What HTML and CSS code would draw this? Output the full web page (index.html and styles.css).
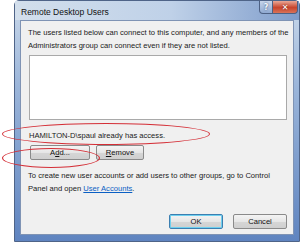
FILE: index.html
```html
<!DOCTYPE html>
<html lang="en">

    <head>
        <meta charset="UTF-8">
        <title>Remote Desktop Users</title>
        <link rel="stylesheet" href="styles.css">
    </head>

    <body>
        <div class="window">
            <div class="titlebar">
                <span class="title">Remote Desktop Users</span>
                <div class="caption-btns">
                    <span class="cap help">?</span>
                    <span class="cap close">✕</span>
                </div>
            </div>
            <div class="client">
                <p class="intro">The users listed below can connect to this computer, and any members of the Administrators group can connect even if they are not listed.</p>
                <div class="listbox"></div>
                <p class="access">HAMILTON-D\spaul already has access.</p>
                <div class="row">
                    <button class="btn add">A<u>d</u>d...</button>
                    <button class="btn remove"><u>R</u>emove</button>
                </div>
                <p class="note">To create new user accounts or add users to other groups, go to Control Panel and open <a href="#">User Accounts</a>.</p>
                <div class="footer">
                    <button class="btn ok">OK</button>
                    <button class="btn">Cancel</button>
                </div>
            </div>
        </div>
        <!-- red marks drawn over the dialog -->
        <div class="mark mark-access"></div>
        <div class="mark mark-add"></div>
    </body>

</html>
```

FILE: styles.css
```css
*,
*::before,
*::after {
    box-sizing: border-box;
}

body {
    margin: 0;
    width: 300px;
    height: 242px;
    overflow: hidden;
    position: relative;
    background: #fff;
    font-family: 'Liberation Sans', Arial, sans-serif;
    font-size: 7.6px;
    color: #1a1a1a;
}

.window {
    margin-left: 14px;
    width: 286px;
    height: 242px;
    padding: 0 5px 6px 5px;
    display: flex;
    flex-direction: column;
    border: 1px solid #4f6488;
    border-radius: 5px 5px 0 0;
    background: linear-gradient(180deg, #c9d8ea 0%, #9cb6da 35%, #5f84c0 100%);
}

.titlebar {
    height: 19px;
    display: flex;
    align-items: flex-start;
    justify-content: space-between;
    background: linear-gradient(90deg, #d3dfec 0%, #bfd1e8 55%, #7e9ccb 100%);
    margin: 0 -5px;
    padding-left: 6px;
}

.title {
    margin-top: 6px;
    font-size: 8.5px;
    color: #111;
}

.caption-btns {
    display: flex;
    margin-right: 1px;
}

.cap {
    height: 13px;
    display: flex;
    align-items: center;
    justify-content: center;
    color: #fff;
    font-family: 'DejaVu Sans', sans-serif;
    font-size: 8px;
    font-weight: bold;
    border: 1px solid #4d6184;
    border-top: none;
}

.help {
    width: 14px;
    color: #f4f7fb;
    text-shadow: 0 0 2px #30486e;
    background: linear-gradient(180deg, #c8d6ea, #8fa9d1);
    border-radius: 0 0 0 4px;
}

.close {
    width: 25px;
    border-left: none;
    text-shadow: 0 0 2px #6a1508;
    background: linear-gradient(180deg, #eaa896, #c8442c 55%, #d9735a);
    border-radius: 0 0 4px 0;
}

.client {
    flex: 1;
    background: #f0f0f0;
    border: 1px solid #7f93b4;
    padding: 5px 6px 0 7px;
    display: flex;
    flex-direction: column;
}

p {
    margin: 0;
}

.intro {
    line-height: 12.5px;
    padding-top: 1px;
    margin-right: -4px;
}

.listbox {
    height: 65px;
    margin: 3px 0 0 1px;
    background: #fff;
    border: 1px solid #a9a9a9;
}

.access {
    margin-top: 11px;
    padding-left: 1px;
}

.row {
    display: flex;
    gap: 6px;
    margin-top: 5px;
    padding-left: 2px;
}

.btn {
    height: 15px;
    padding: 0;
    font-family: inherit;
    font-size: 7.6px;
    color: #111;
    border: 1px solid #8a8a8a;
    border-radius: 2px;
    background: linear-gradient(180deg, #f4f4f4 0%, #e6e6e6 50%, #d6d6d6 51%, #cfcfcf 100%);
}

.add {
    width: 60px;
}

.remove {
    width: 48px;
}

.note {
    margin-top: 9px;
    line-height: 13px;
}

.note a {
    display: inline-block;
    line-height: 10px;
    color: #0a5fc4;
}

.footer {
    margin-top: auto;
    margin-bottom: 5px;
    display: flex;
    justify-content: flex-end;
    gap: 10px;
}

.footer .btn {
    width: 54px;
}

.ok {
    border-color: #3c7fb1;
    box-shadow: inset 0 0 0 1px #6fd0ef;
}

.mark {
    position: absolute;
    border: 1.5px solid #d42e36;
    border-radius: 50%;
}

.mark-access {
    left: 2px;
    top: 123px;
    width: 208px;
    height: 22px;
}

.mark-add {
    left: 2px;
    top: 148px;
    width: 98px;
    height: 20px;
}
```
